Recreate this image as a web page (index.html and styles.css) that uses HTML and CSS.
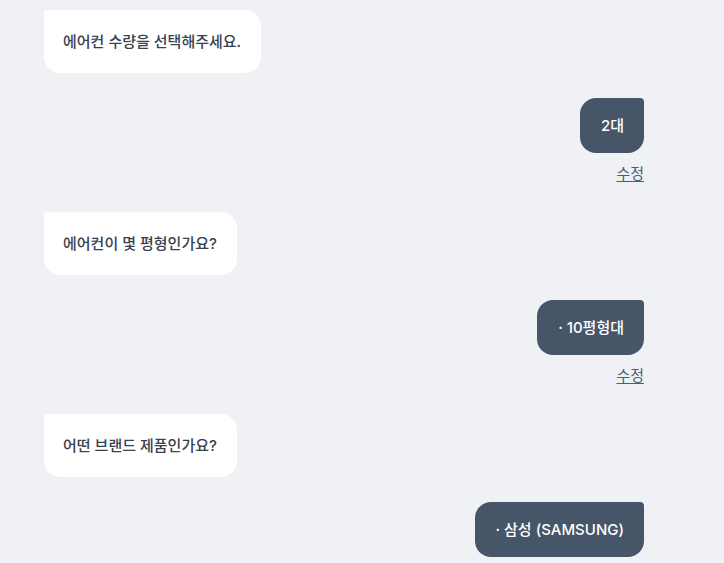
FILE: index.html
```html
<!DOCTYPE html>
<html lang="ko">
<head>
<meta charset="utf-8">
<link rel="stylesheet" href="styles.css">
</head>
<body>
<div class="chat">
  <div class="msg bot"><div class="bubble">에어컨 수량을 선택해주세요.</div></div>
  <div class="msg user"><div class="bubble">2대</div><a class="edit" href="#">수정</a></div>
  <div class="msg bot"><div class="bubble">에어컨이 몇 평형인가요?</div></div>
  <div class="msg user"><div class="bubble">· 10평형대</div><a class="edit" href="#">수정</a></div>
  <div class="msg bot"><div class="bubble">어떤 브랜드 제품인가요?</div></div>
  <div class="msg user"><div class="bubble">· 삼성 (SAMSUNG)</div></div>
</div>
</body>
</html>
```
FILE: styles.css
```css
html, body {
  margin: 0;
  padding: 0;
  background: #eff1f5;
  font-family: Inter, "Noto Sans CJK KR", sans-serif;
}
.chat {
  width: 600px;
  padding: 10px 0 0 44px;
  display: flex;
  flex-direction: column;
}
.msg {
  display: flex;
  flex-direction: column;
}
.msg.bot {
  align-items: flex-start;
  margin-bottom: 25px;
}
.msg.user {
  align-items: flex-end;
  margin-bottom: 28px;
}
.bot .bubble {
  background: #ffffff;
  color: #374151;
  font-size: 15px;
  font-weight: 500;
  line-height: 23px;
  padding: 20px 20px 20px 19px;
  border-radius: 4px 16px 16px 16px;
}
.user .bubble {
  background: #475569;
  color: #ffffff;
  font-size: 15px;
  font-weight: 500;
  line-height: 23px;
  padding: 16px 20px 16px 21px;
  border-radius: 16px 4px 16px 16px;
}
.edit {
  margin-top: 11px;
  font-size: 15px;
  line-height: 20px;
  color: #4b5e78;
  text-decoration: underline;
  text-underline-offset: 2px;
}
```
